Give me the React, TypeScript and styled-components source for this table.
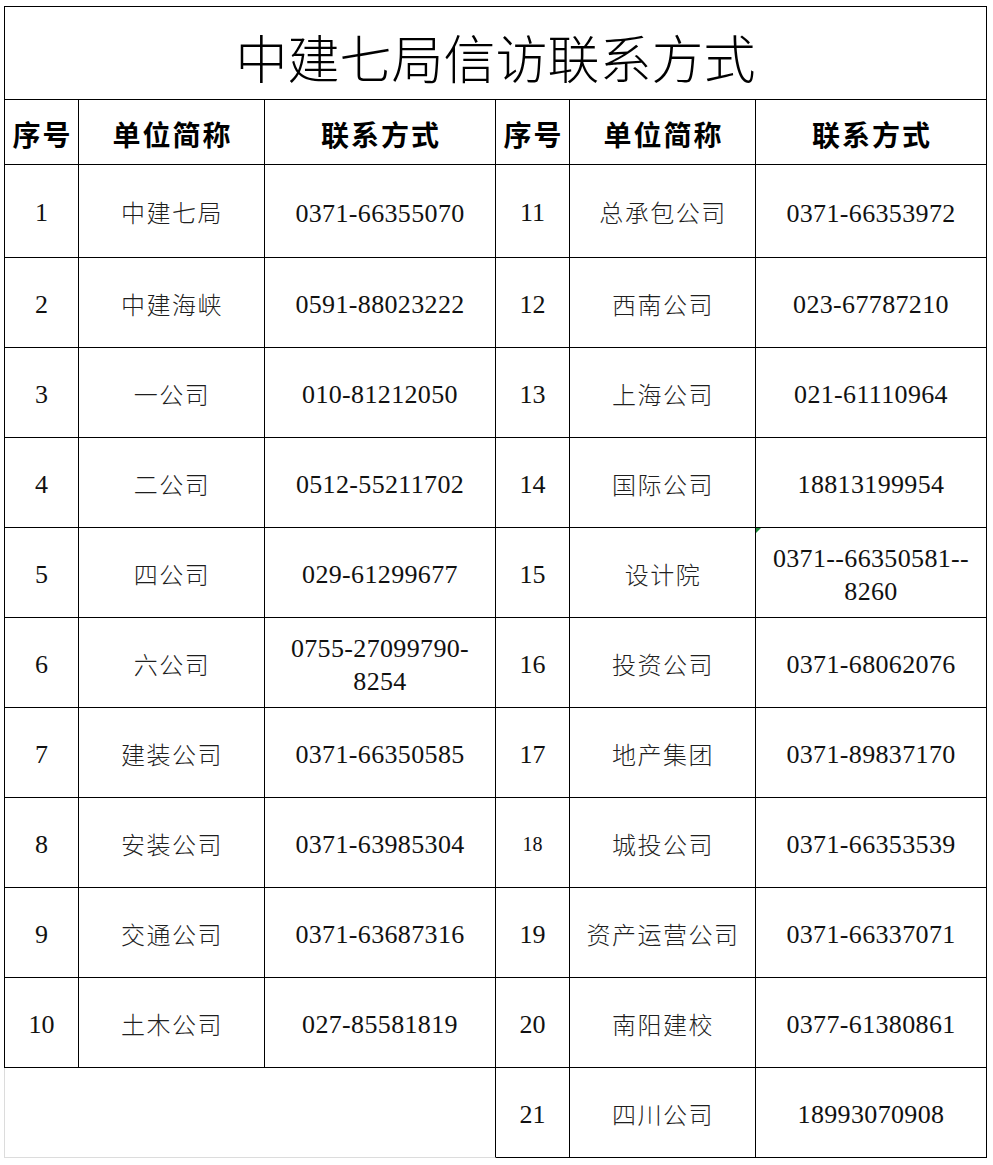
import React from "react";
import styled, { createGlobalStyle, css } from "styled-components";

const Global = createGlobalStyle`
  html, body { margin: 0; padding: 0; background: #ffffff; }
  *, *::before, *::after { box-sizing: border-box; }
`;

const Page = styled.div`
  width: 993px;
  height: 1165px;
  padding: 6px 0 0 4px;
  background: #fff;
  overflow: hidden;
`;

const Sheet = styled.div`
  display: grid;
  grid-template-columns: 75px 186px 231px 74px 186px 231px;
  grid-template-rows: 94px 65px 93px repeat(9, 90px) 90px;
  width: 983px;
`;

const CJK = `"Noto Sans CJK SC", "Noto Sans", sans-serif`;
const SERIF = `"Liberation Serif", "Noto Sans CJK SC", serif`;

const baseCell = css`
  display: flex;
  align-items: center;
  justify-content: center;
  text-align: center;
  border-right: 1px solid #000;
  border-bottom: 1px solid #000;
  color: #111;
`;

const TitleCell = styled.div`
  ${baseCell};
  grid-column: 1 / -1;
  border-top: 1px solid #000;
  border-left: 1px solid #000;
  font-family: ${CJK};
  font-weight: 300;
  font-size: 52px;
  padding-top: 6px;
  color: #000;
`;

const HeaderCell = styled.div<{ $first?: boolean }>`
  ${baseCell};
  ${(p) => p.$first && css`border-left: 1px solid #000;`}
  font-family: ${CJK};
  font-weight: 700;
  font-size: 28px;
  letter-spacing: 2px;
  padding-top: 4px;
  padding-left: 2px;
  color: #000;
`;

const NoCell = styled.div<{ $first?: boolean; $small?: boolean }>`
  ${baseCell};
  ${(p) => p.$first && css`border-left: 1px solid #000;`}
  font-family: ${SERIF};
  font-size: ${(p) => (p.$small ? "20px" : "26px")};
  padding-top: 4px;
`;

const NameCell = styled.div`
  ${baseCell};
  font-family: ${CJK};
  font-weight: 300;
  font-size: 24px;
  letter-spacing: 1.5px;
  padding-top: 1px;
  padding-left: 1px;
  color: #1f1f1f;
`;

const PhoneCell = styled.div<{ $mark?: boolean }>`
  ${baseCell};
  position: relative;
  flex-direction: column;
  font-family: ${SERIF};
  font-size: 26px;
  line-height: 33px;
  letter-spacing: 0.35px;
  padding-top: 4px;
  ${(p) =>
    p.$mark &&
    css`
      &::before {
        content: "";
        position: absolute;
        left: 0;
        top: 0;
        width: 0;
        height: 0;
        border-top: 5px solid #1d8a3a;
        border-right: 5px solid transparent;
      }
    `}
`;

const EmptyCell = styled.div`
  grid-column: 1 / span 3;
  border-left: 1px solid #dcdcdc;
  border-bottom: 1px solid #dcdcdc;
  border-right: 1px solid #000;
`;

type Entry = {
  no: string;
  name: string;
  phone: string[];
  small?: boolean;
  mark?: boolean;
};

const left: Entry[] = [
  { no: "1", name: "中建七局", phone: ["0371-66355070"] },
  { no: "2", name: "中建海峡", phone: ["0591-88023222"] },
  { no: "3", name: "一公司", phone: ["010-81212050"] },
  { no: "4", name: "二公司", phone: ["0512-55211702"] },
  { no: "5", name: "四公司", phone: ["029-61299677"] },
  { no: "6", name: "六公司", phone: ["0755-27099790-", "8254"] },
  { no: "7", name: "建装公司", phone: ["0371-66350585"] },
  { no: "8", name: "安装公司", phone: ["0371-63985304"] },
  { no: "9", name: "交通公司", phone: ["0371-63687316"] },
  { no: "10", name: "土木公司", phone: ["027-85581819"] },
];

const right: Entry[] = [
  { no: "11", name: "总承包公司", phone: ["0371-66353972"] },
  { no: "12", name: "西南公司", phone: ["023-67787210"] },
  { no: "13", name: "上海公司", phone: ["021-61110964"] },
  { no: "14", name: "国际公司", phone: ["18813199954"] },
  { no: "15", name: "设计院", phone: ["0371--66350581--", "8260"], mark: true },
  { no: "16", name: "投资公司", phone: ["0371-68062076"] },
  { no: "17", name: "地产集团", phone: ["0371-89837170"] },
  { no: "18", name: "城投公司", phone: ["0371-66353539"], small: true },
  { no: "19", name: "资产运营公司", phone: ["0371-66337071"] },
  { no: "20", name: "南阳建校", phone: ["0377-61380861"] },
];

const last: Entry = { no: "21", name: "四川公司", phone: ["18993070908"] };

const EntryCells: React.FC<{ e: Entry; first?: boolean }> = ({ e, first }) => (
  <>
    <NoCell $first={first} $small={e.small}>{e.no}</NoCell>
    <NameCell>{e.name}</NameCell>
    <PhoneCell $mark={e.mark}>
      {e.phone.map((l, i) => (
        <span key={i}>{l}</span>
      ))}
    </PhoneCell>
  </>
);

export default function App() {
  return (
    <Page>
      <Global />
      <Sheet>
        <TitleCell>中建七局信访联系方式</TitleCell>
        <HeaderCell $first>序号</HeaderCell>
        <HeaderCell>单位简称</HeaderCell>
        <HeaderCell>联系方式</HeaderCell>
        <HeaderCell>序号</HeaderCell>
        <HeaderCell>单位简称</HeaderCell>
        <HeaderCell>联系方式</HeaderCell>
        {left.map((e, i) => (
          <React.Fragment key={e.no}>
            <EntryCells e={e} first />
            <EntryCells e={right[i]} />
          </React.Fragment>
        ))}
        <EmptyCell />
        <EntryCells e={last} />
      </Sheet>
    </Page>
  );
}
